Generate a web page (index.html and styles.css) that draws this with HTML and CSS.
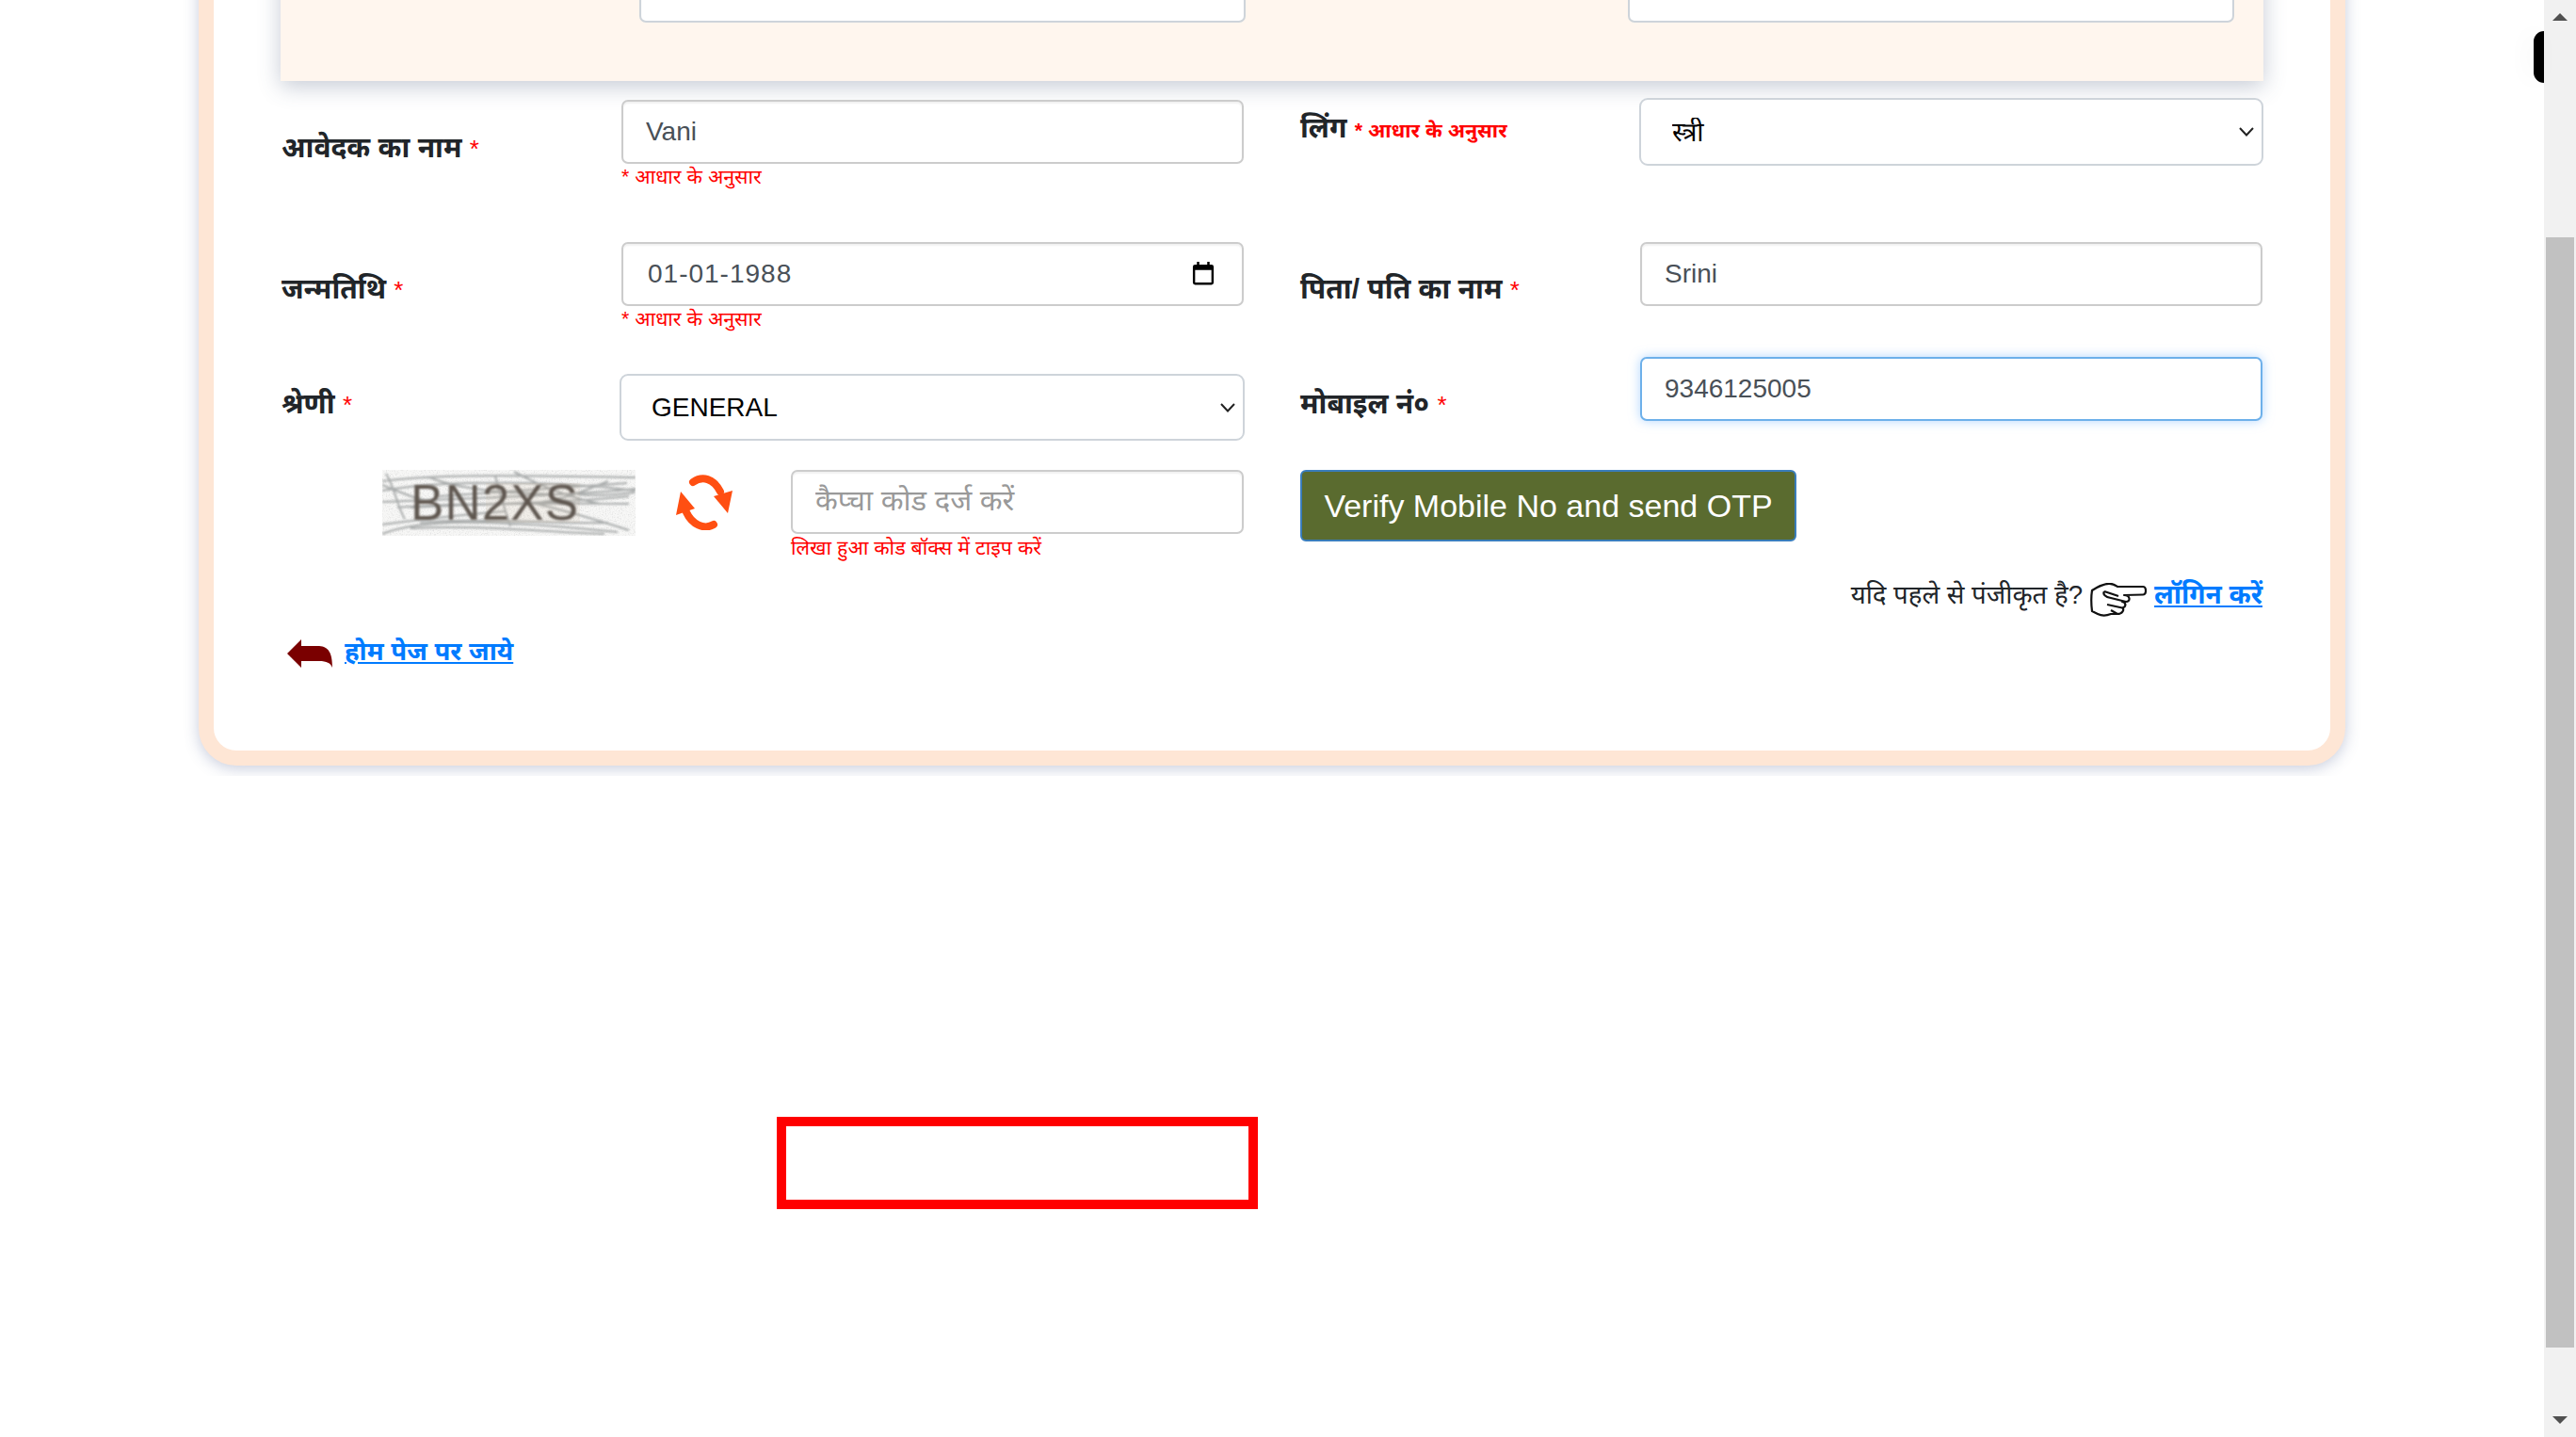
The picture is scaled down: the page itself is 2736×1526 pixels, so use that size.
FILE: index.html
```html
<!DOCTYPE html>
<html lang="hi">
<head>
<meta charset="utf-8">
<title>पंजीकरण</title>
<link rel="stylesheet" href="styles.css">
</head>
<body>
<main class="page">
  <div class="clip">
    <section class="card">
      <div class="panel">
        <input class="field panel-field" type="text">
        <input class="field panel-field" type="text">
      </div>
      <form class="form">
        <div class="row row-1">
          <label class="label label-low">आवेदक का नाम <span class="req">*</span></label>
          <div class="cell">
            <input class="field" type="text" value="Vani">
            <p class="hint">* आधार के अनुसार</p>
          </div>
          <label class="label label-high label-right">लिंग <span class="inline-hint">* आधार के अनुसार</span></label>
          <div class="cell-select"><select class="select select-gender"><option>स्त्री</option></select></div>
        </div>
        <div class="row row-2">
          <label class="label label-mid">जन्मतिथि <span class="req">*</span></label>
          <div class="cell">
            <div class="date-wrap">
              <input class="field field-date" type="text" value="01-01-1988">
              <svg class="cal" viewBox="0 0 24 26" aria-hidden="true"><path d="M5 0h2.600v3h8.800V0H19v3h2a2.500 2.500 0 0 1 2.500 2.500V23a2.500 2.500 0 0 1-2.500 2.500H3A2.500 2.500 0 0 1 .5 23V5.500A2.500 2.500 0 0 1 3 3h2zM3 9v14h18V9z"/></svg>
            </div>
            <p class="hint">* आधार के अनुसार</p>
          </div>
          <label class="label label-mid label-right">पिता/ पति का नाम <span class="req">*</span></label>
          <div class="cell-right"><input class="field" type="text" value="Srini"></div>
        </div>
        <div class="row row-3">
          <label class="label label-mid-3">श्रेणी <span class="req">*</span></label>
          <div class="cell-select-left"><select class="select"><option>GENERAL</option></select></div>
          <label class="label label-mid-3 label-right">मोबाइल नं० <span class="req">*</span></label>
          <div class="cell-right"><input class="field field-focus" type="text" value="9346125005"></div>
        </div>
        <div class="captcha-row">
          <div class="captcha-group">
            <svg class="captcha" viewBox="0 0 269 70" role="img">
              <defs>
                <filter id="speck" x="0" y="0" width="100%" height="100%"><feTurbulence type="fractalNoise" baseFrequency="0.7" numOctaves="2" seed="4"/><feColorMatrix values="0 0 0 0 .62  0 0 0 0 .62  0 0 0 0 .62  1.500 0 0 0 -.72"/></filter>
                <filter id="soft"><feGaussianBlur stdDeviation="0.9"/></filter>
              </defs>
              <rect width="269" height="70" fill="#f7f7f6"/>
              <rect width="269" height="70" filter="url(#speck)"/>
              <g class="captcha-lines" filter="url(#soft)">
                <path d="M0 12C60 4 160 6 269 8M0 22C70 10 190 12 269 22M0 34C80 30 200 28 269 20M30 40C100 36 190 36 262 28M16 40C90 34 210 36 262 36M0 68C40 52 110 52 250 66M40 56C100 50 190 58 240 56M0 58C60 50 80 48 130 44M155 34C190 42 225 52 262 64M4 4C14 20 16 40 24 52M120 6C124 24 130 40 136 60M50 8C80 20 120 24 180 26M140 2C170 18 200 30 232 36M0 16C20 24 28 28 44 32M240 12C210 24 190 32 170 34M30 62C100 58 170 66 236 68M208 26C225 28 250 26 268 24M60 28C120 24 180 20 260 14"/>
              </g>
              <rect class="captcha-tint" x="110" y="14" width="100" height="42"/>
              <text class="captcha-text" x="30" y="53" textLength="178" filter="url(#soft)">BN2XS</text>
            </svg>
            <svg class="refresh" viewBox="0 0 60 60" aria-hidden="true">
              <path class="refresh-arc" d="M18 9C28 2 40 5 47 19M40 54C30 60 17 54 11 41"/>
              <path class="refresh-head" d="M60 18 40 24 55 42zM0 44 20 37 5 19z"/>
            </svg>
            <div class="captcha-input">
              <input class="field field-captcha" type="text" placeholder="कैप्चा कोड दर्ज करें">
              <p class="hint hint-tight">लिखा हुआ कोड बॉक्स में टाइप करें</p>
            </div>
          </div>
          <button class="btn" type="button">Verify Mobile No and send OTP</button>
        </div>
        <p class="login-line">यदि पहले से पंजीकृत है?
          <svg class="hand" viewBox="0 0 60 36" aria-hidden="true"><path d="M29 4H56C60 4 60 12.500 56 12.500L36 13C43 13 43 20 38 20H34C39 21 38 26 34 26.500 37 28 34 33 29 33H22C17 35 12 35 8 33L2 30C1 22 1 14 2 8 8 4 14 1 20 .8 24 .5 26 2 29 4ZM15 9 30 14M15 9C13 12 16 15 22 16L38 20M18 23 34 26.500M22 29 29 33"/></svg>
          <a class="link link-login" href="#">लॉगिन करें</a></p>
        <p class="back-line">
          <svg class="back-arrow" viewBox="0 0 48 30" aria-hidden="true"><path d="M0 15 15 0V7H34C44 8 48 14 48 30 46 25 42 23 34 23H15V30z"/></svg>
          <a class="link" href="#">होम पेज पर जाये</a>
        </p>
      </form>
    </section>
  </div>
  <div class="red-box"></div>
  <div class="side-tab"></div>
</main>
<aside class="scrollbar" aria-hidden="true">
  <span class="arrow arrow-up"></span>
  <div class="track"><div class="thumb"></div></div>
  <span class="arrow arrow-down"></span>
</aside>
</body>
</html>
```
FILE: styles.css
```css
* { box-sizing: border-box; }
html, body { margin: 0; height: 100%; overflow: hidden; }
body {
  display: flex;
  background: #fff;
  color: #212529;
  font-family: "Liberation Sans", "Noto Sans Devanagari", "Noto Sans", sans-serif;
  font-size: 28px;
}
.page { position: relative; flex: 1; min-width: 0; height: 1526px; }
.clip { height: 824px; overflow: hidden; }
.card {
  width: 2280px;
  height: 893px;
  margin: -80px 0 0 211px;
  background: #fff;
  border: 16px solid #fee6d5;
  border-radius: 40px;
  box-shadow: 0 3px 16px rgba(70, 85, 140, .3);
  padding: 0 71px;
}
.panel {
  display: grid;
  grid-template-columns: 644px 644px;
  column-gap: 406px;
  height: 150px;
  padding: 20px 0 0 381px;
  background: #fff6ee;
  box-shadow: 0 6px 22px rgba(70, 85, 120, .3);
}
.field {
  display: block;
  width: 100%;
  height: 68px;
  padding: 0 24px;
  border: 2px solid #ccc;
  border-radius: 7px;
  background: #fff;
  color: #495057;
  font: 28px "Liberation Sans", "Noto Sans Devanagari", "Noto Sans", sans-serif;
  box-shadow: inset 0 2px 2px rgba(0, 0, 0, .06);
  outline: 0;
}
.field::placeholder { color: #999; opacity: 1; }
.field-captcha::placeholder { font-size: 31px; }
.field-date { padding-left: 26px; letter-spacing: 1px; }
.panel-field { border-color: #ced4da; }
.field-focus {
  border-color: #6db0ea;
  box-shadow: 0 0 12px rgba(128, 189, 255, .6);
}
.form { padding-top: 20px; }
.row {
  display: grid;
  grid-template-columns: 360px 664px 59px 360px 663px;
}
.row-1 { height: 151px; }
.row-2 { height: 122px; }
.row-3 { height: 120px; }
.label { padding-left: 1px; font-weight: 700; font-size: 30px; line-height: 42px; color: #212529; }
.label-low { margin-top: 30px; }
.label-high { margin-top: 9px; }
.label-mid { margin-top: 29px; }
.label-mid-3 { margin-top: 29px; }
.label-right { grid-column: 4; padding-left: 0; }
.req { color: #f00; font-weight: 400; font-size: 26px; }
.inline-hint { color: #f00; font-size: 21.400px; }
.cell { margin: 0 1px 0 2px; }
.cell-right { margin: 0 1px; }
.cell-select { margin-top: -2px; }
.cell-select-left { margin-top: 18px; }
.select {
  display: block;
  width: 100%;
  height: 71px;
  padding: 0 32px;
  border: 2px solid #ced4da;
  border-radius: 9px;
  appearance: none;
  background: #fff url("data:image/svg+xml,%3Csvg xmlns='http://www.w3.org/2000/svg' width='16' height='10'%3E%3Cpath d='M1 1l7 7.500L15 1' fill='none' stroke='%23222' stroke-width='2'/%3E%3C/svg%3E") no-repeat right 8px center;
  color: #000;
  font: 28px "Liberation Sans", "Noto Sans Devanagari", "Noto Sans", sans-serif;
}
.select-gender { height: 72px; padding-left: 33px; }
.hint { margin: 0; color: #f00; font-size: 21.400px; line-height: 28px; }
.hint-tight { line-height: 30px; }
.date-wrap { position: relative; }
.cal { position: absolute; top: 21px; right: 31px; width: 24px; height: 25px; }
.captcha-row {
  display: grid;
  grid-template-columns: 1024px 59px 527px;
  height: 114px;
}
.captcha-group { display: flex; align-items: flex-start; padding-left: 108px; }
.captcha { width: 269px; height: 70px; flex: none; }
.captcha-lines { fill: none; stroke: #a8abab; stroke-width: 2; }
.captcha-tint { fill: #c8a98a; opacity: .12; }
.captcha-text { font: 53px "Liberation Sans", sans-serif; fill: #5e5650; }
.refresh { flex: none; width: 60px; height: 60px; margin: 4px 62px 0 43px; }
.refresh-arc { fill: none; stroke: #ff4f12; stroke-width: 8; stroke-linecap: round; }
.refresh-head { fill: #ff4f12; }
.captcha-input { flex: none; width: 481px; }
.btn {
  grid-column: 3;
  height: 76px;
  padding: 0;
  border: 2px solid #3a7dbb;
  border-radius: 6px;
  background: #5a6b2f;
  color: #fff;
  font: 34px "Liberation Sans", sans-serif;
}
.login-line {
  display: flex;
  justify-content: flex-end;
  align-items: center;
  gap: 8px;
  margin: 0;
  height: 42px;
  padding-right: 1px;
  font-size: 27.600px;
}
.hand { width: 60px; height: 36px; flex: none; fill: #fff; stroke: #111; stroke-width: 2.200; stroke-linejoin: round; margin-top: 6px; }
.link { color: #007bff; font-weight: 700; font-size: 27.500px; text-decoration: underline; }
.link-login { font-size: 28px; }
.back-line { display: flex; align-items: center; gap: 13px; margin: 18px 0 0 7px; height: 42px; font-size: 28px; }
.back-arrow { width: 48px; height: 30px; flex: none; fill: #7a0000; }
.red-box {
  width: 511px;
  height: 98px;
  margin: 362px 0 0 825px;
  border: 10px solid #f00;
}
.side-tab {
  position: absolute;
  top: 33px;
  right: 0;
  width: 11px;
  height: 55px;
  border-radius: 11px 0 0 11px;
  background: #000;
  box-shadow: -6px 0 24px rgba(0, 0, 0, .04);
}
.scrollbar {
  display: flex;
  flex: none;
  flex-direction: column;
  width: 34px;
  height: 1526px;
  background: #f1f1f1;
}
.arrow { display: block; flex: none; width: 0; margin: 0 auto; border-left: 8px solid transparent; border-right: 8px solid transparent; }
.arrow-up { margin-top: 14px; border-bottom: 8px solid #505050; }
.arrow-down { margin-bottom: 14px; border-top: 8px solid #505050; }
.track { flex: 1; padding: 230px 2px 0; }
.thumb { height: 1179px; background: #c1c1c1; }
```
